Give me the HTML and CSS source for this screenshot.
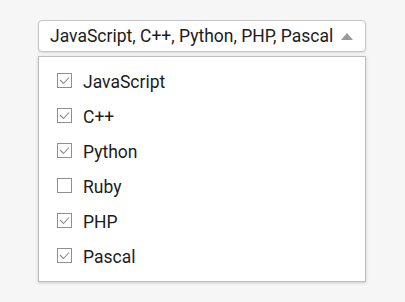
FILE: index.html
```html
<!DOCTYPE html>
<html>
<head>
<meta charset="utf-8">
<link rel="stylesheet" href="styles.css">
</head>
<body>
<div class="wrap">
  <div class="select">
    <span class="value">JavaScript, C++, Python, PHP, Pascal</span>
    <span class="caret"></span>
  </div>
  <ul class="menu">
    <li class="opt"><span class="box"><svg class="tick" viewBox="0 0 13 13" width="13" height="13"><polyline points="2,6 5.5,9.5 11,3.5"/></svg></span><span>JavaScript</span></li>
    <li class="opt"><span class="box"><svg class="tick" viewBox="0 0 13 13" width="13" height="13"><polyline points="2,6 5.5,9.5 11,3.5"/></svg></span><span>C++</span></li>
    <li class="opt"><span class="box"><svg class="tick" viewBox="0 0 13 13" width="13" height="13"><polyline points="2,6 5.5,9.5 11,3.5"/></svg></span><span>Python</span></li>
    <li class="opt"><span class="box"></span><span>Ruby</span></li>
    <li class="opt"><span class="box"><svg class="tick" viewBox="0 0 13 13" width="13" height="13"><polyline points="2,6 5.5,9.5 11,3.5"/></svg></span><span>PHP</span></li>
    <li class="opt"><span class="box"><svg class="tick" viewBox="0 0 13 13" width="13" height="13"><polyline points="2,6 5.5,9.5 11,3.5"/></svg></span><span>Pascal</span></li>
  </ul>
</div>
</body>
</html>
```
FILE: styles.css
```css
html, body { margin: 0; padding: 0; }
body {
  background: #f6f6f6;
  font-family: Roboto, "Liberation Sans", sans-serif;
  color: #1c1c1c;
  width: 405px;
  height: 302px;
  overflow: hidden;
}
.wrap {
  width: 328px;
  margin: 20px 0 0 38px;
  display: flex;
  flex-direction: column;
  gap: 4px;
}
.select {
  box-sizing: border-box;
  height: 32px;
  background: #fff;
  border: 1px solid #c6c6c6;
  border-radius: 4px;
  box-shadow: 0 1px 2px rgba(0,0,0,0.12);
  display: flex;
  align-items: center;
  justify-content: space-between;
  padding: 0 12px 0 11px;
  font-size: 17.5px;
}
.caret {
  width: 0; height: 0;
  border-left: 6px solid transparent;
  border-right: 6px solid transparent;
  border-bottom: 7px solid #9a9a9a;
}
.menu {
  list-style: none;
  margin: 0;
  padding: 7px 0;
  box-sizing: border-box;
  height: 226px;
  background: #fff;
  border: 1px solid #bdbdbd;
  box-shadow: 0 1px 3px rgba(0,0,0,0.18);
}
.opt {
  height: 35px;
  display: flex;
  align-items: center;
  gap: 11px;
  padding-left: 18px;
  font-size: 17.5px;
}
.box {
  box-sizing: border-box;
  width: 15px; height: 15px;
  border: 1px solid #8f8f8f;
  margin-top: -2px;
  display: flex;
}
.tick {
  display: block;
  fill: none;
  stroke: #8a8a8a;
  stroke-width: 1.1;
}
```
